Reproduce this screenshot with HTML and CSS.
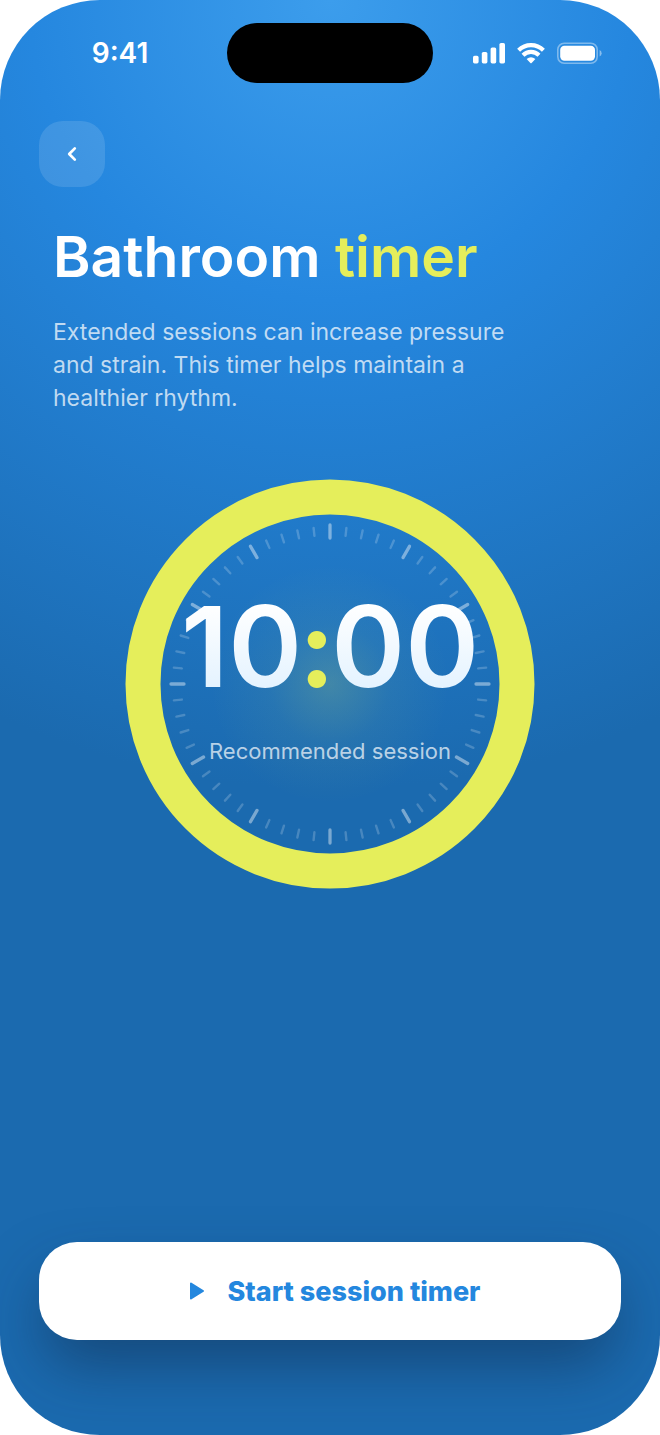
FILE: index.html
```html
<!DOCTYPE html>
<html lang="en">
<head>
    <meta charset="UTF-8">
    <meta name="viewport" content="width=device-width, initial-scale=1.0">
    <title>Bathroom timer</title>
    <link rel="stylesheet" href="styles.css">
</head>
<body>

    <div class="phone">

        <!-- Status bar -->
        <div class="status-bar">
            <span class="status-time">9:41</span>
            <div class="island"></div>
            <div class="status-icons">
                <svg width="32" height="22" viewBox="0 0 32 22" fill="#fff" aria-hidden="true">
                    <rect x="0" y="13.8" width="5.6" height="7.6" rx="1.6"/>
                    <rect x="8.8" y="10" width="5.6" height="11.4" rx="1.6"/>
                    <rect x="17.6" y="5.4" width="5.6" height="16" rx="1.6"/>
                    <rect x="26.4" y="1" width="5.6" height="20.4" rx="1.6"/>
                </svg>
                <svg width="28" height="22" viewBox="0 0 28 22" aria-hidden="true">
                    <g fill="none" stroke="#fff" stroke-width="4.2">
                        <path d="M1.6 8.2 A17.6 17.6 0 0 1 26.4 8.2"/>
                        <path d="M6 13.2 A11.4 11.4 0 0 1 22 13.2"/>
                    </g>
                    <path d="M9.6 17 Q14 13.6 18.4 17 L14.6 21 Q14 21.6 13.4 21 Z" fill="#fff"/>
                </svg>
                <svg width="45" height="22" viewBox="0 0 45 22" aria-hidden="true">
                    <rect x="0.8" y="1.2" width="39.4" height="20" rx="6.4" fill="none" stroke="#fff" stroke-opacity=".4" stroke-width="1.6"/>
                    <rect x="3.2" y="3.7" width="34.8" height="15" rx="4.2" fill="#fff"/>
                    <path d="M42.6 8 Q44.6 8.8 44.6 11.2 Q44.6 13.6 42.6 14.4 Z" fill="#fff" fill-opacity=".45"/>
                </svg>
            </div>
        </div>

        <button class="back" type="button" aria-label="Back">
            <svg width="26" height="26" viewBox="0 0 26 26" aria-hidden="true">
                <path d="M15.8 7.4 L10.2 13 L15.8 18.6" fill="none" stroke="#fff" stroke-width="2.7" stroke-linecap="round" stroke-linejoin="round"/>
            </svg>
        </button>

        <header class="intro">
            <h1>Bathroom <span class="accent">timer</span></h1>
            <p>Extended sessions can increase pressure and strain. This timer helps maintain a healthier rhythm.</p>
        </header>

        <!-- Dial -->
        <main class="dial">
            <svg class="dial-face" viewBox="-205 -205 410 410" aria-hidden="true">
                <defs>
                    <radialGradient id="glow">
                        <stop offset="0" stop-color="#e5ee5b" stop-opacity=".18"/>
                        <stop offset=".5" stop-color="#e5ee5b" stop-opacity=".05"/>
                        <stop offset="1" stop-color="#e5ee5b" stop-opacity="0"/>
                    </radialGradient>
                </defs>
                <circle r="120" fill="url(#glow)"/>
                <circle class="ring" r="187"/>
                <g id="ticks"></g>
            </svg>
            <div class="dial-text">
                <div class="time"><span class="digits">10</span><span class="colon">:</span><span class="digits">00</span></div>
                <div class="caption">Recommended session</div>
            </div>
        </main>

        <button class="start" type="button">
            <svg width="32" height="32" viewBox="0 0 32 32" aria-hidden="true">
                <path d="M11 8.5 L23 16 L11 23.5 Z" fill="#2487de" stroke="#2487de" stroke-width="2" stroke-linejoin="round"/>
            </svg>
            Start session timer
        </button>
    </div>

    <script>
        // 60 ticks, every fifth one is longer
        const ticks = document.getElementById('ticks');
        for (let i = 0; i < 60; i++) {
            const line = document.createElementNS('http://www.w3.org/2000/svg', 'line');
            const major = i % 5 === 0;
            line.setAttribute('y1', major ? -159 : -157);
            line.setAttribute('y2', major ? -146 : -149);
            line.setAttribute('class', major ? 'tick major' : 'tick');
            line.setAttribute('transform', `rotate(${i * 6})`);
            ticks.appendChild(line);
        }
    </script>

</body>
</html>
```

FILE: styles.css
```css
* {
    box-sizing: border-box;
}
body {
    margin: 0;
    background-color: #fff;
    color: #fff;
    font-family: Inter, sans-serif;
}
button {
    border: none;
    padding: 0;
    font-family: inherit;
    cursor: pointer;
}
svg {
    display: block;
}

.phone {
    display: flex;
    flex-direction: column;
    min-height: 100vh;
    padding: 23px 39px 95px;
    border-radius: 100px;
    background: radial-gradient(120% 55% at 50% 0, #3c9dec 0%, #2587df 38%, #1b6aaf 100%);
    overflow: hidden;
}

/* Status bar */
.status-bar {
    display: grid;
    grid-template-columns: 1fr 206px 1fr;
    align-items: center;
}
.status-time {
    padding-right: 26px;
    font-size: 28px;
    font-weight: 600;
    text-align: center;
}
.island {
    height: 60px;
    border-radius: 32px;
    background-color: #000;
}
.status-icons {
    display: flex;
    justify-content: flex-end;
    gap: 12px;
    padding-right: 19px;
}

/* Back button */
.back {
    display: flex;
    align-items: center;
    justify-content: center;
    width: 66px;
    height: 66px;
    margin-top: 38px;
    border-radius: 24px;
    background-color: rgba(255, 255, 255, 0.12);
}

/* Title and text */
.intro {
    padding: 38px 14px 0;
}
h1 {
    margin: 0;
    font-size: 57px;
    font-weight: 600;
    line-height: 64px;
}
.accent {
    color: #e5ee5b;
}
.intro p {
    max-width: 480px;
    margin: 27px 0 0;
    color: rgba(255, 255, 255, 0.72);
    font-size: 23px;
    font-weight: 400;
    line-height: 33px;
}

/* Dial */
.dial {
    display: grid;
    justify-items: center;
    align-items: center;
    margin-top: 64px;
}
.dial-face,
.dial-text {
    grid-area: 1 / 1;
}
.dial-face {
    width: 410px;
    max-width: 100%;
}
.ring {
    fill: none;
    stroke: #e5ee5b;
    stroke-width: 35px;
}
.tick {
    stroke: rgba(255, 255, 255, 0.2);
    stroke-width: 2.4px;
    stroke-linecap: round;
}
.tick.major {
    stroke: rgba(255, 255, 255, 0.42);
    stroke-width: 3.3px;
}
.dial-text {
    padding-bottom: 18px;
    text-align: center;
}
.time {
    display: flex;
    align-items: baseline;
    justify-content: center;
    font-size: 112px;
    font-weight: 600;
    line-height: 120px;
}
.digits {
    background: linear-gradient(#fff 15%, #e2f2ff 90%);
    background-clip: text;
    -webkit-background-clip: text;
    color: transparent;
}
.colon {
    color: #e5ee5b;
    font-family: Lato, sans-serif;
    font-weight: 900;
}
.caption {
    margin-top: 30px;
    color: rgba(255, 255, 255, 0.7);
    font-size: 22px;
    line-height: 30px;
}

/* Start button */
.start {
    display: flex;
    align-items: center;
    justify-content: center;
    gap: 16px;
    height: 98px;
    margin-top: auto;
    border-radius: 38px;
    background-color: #fff;
    box-shadow: 0 30px 60px -6px rgba(15, 40, 70, 0.5);
    color: #2487de;
    font-size: 27px;
    font-weight: 800;
}
```
